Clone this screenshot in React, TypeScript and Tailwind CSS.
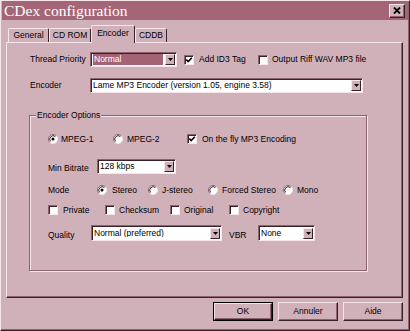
import React from "react";

// small win9x-style widgets, pink theme

function Check({ checked = false }: { checked?: boolean }) {
  return (
    <span className="flex h-[10px] w-[10px] shrink-0 items-center justify-center border border-t-[#8c6470] border-l-[#8c6470] border-b-[#f4e6ea] border-r-[#f4e6ea] bg-white shadow-[inset_1px_1px_0_#3a2028]">
      {checked && (
        <svg width="8" height="8" viewBox="0 0 8 8">
          <polyline points="1.3,3.6 3.2,5.6 6.8,1.8" fill="none" stroke="#000" strokeWidth="1.6" />
        </svg>
      )}
    </span>
  );
}

function Radio({ checked = false }: { checked?: boolean }) {
  return (
    <svg width="10" height="10" viewBox="0 0 10 10" className="shrink-0">
      <circle cx="5" cy="5" r="4.5" fill="#fff" />
      <path d="M1.8 8.2 A4.5 4.5 0 0 1 8.2 1.8" fill="none" stroke="#8c6470" strokeWidth="1" />
      <path d="M2.6 7.4 A3.4 3.4 0 0 1 7.4 2.6" fill="none" stroke="#3a2028" strokeWidth="1" />
      <path d="M8.2 1.8 A4.5 4.5 0 0 1 1.8 8.2" fill="none" stroke="#f4e6ea" strokeWidth="1" />
      {checked && <circle cx="5" cy="5" r="1.5" fill="#000" />}
    </svg>
  );
}

function Select({ text, className, hl = false }: { text: string; className: string; hl?: boolean }) {
  return (
    <div className={`flex h-[15px] items-center border border-t-[#8c6470] border-l-[#8c6470] border-b-[#f4e6ea] border-r-[#f4e6ea] bg-white shadow-[inset_1px_1px_0_#3a2028] ${className}`}>
      {hl ? (
        <span className="ml-[2px] mr-[2px] flex h-[11px] flex-1 items-center bg-[#a36374] px-[1px] text-white">{text}</span>
      ) : (
        <span className="flex-1 truncate pl-[2px]">{text}</span>
      )}
      <span className="mr-[1px] flex h-[11px] w-[10px] items-center justify-center border border-t-[#f4e6ea] border-l-[#f4e6ea] border-b-[#3a2028] border-r-[#3a2028] bg-[#d1b1b9]">
        <svg width="5" height="3" viewBox="0 0 5 3">
          <polygon points="0,0 5,0 2.5,3" fill="#000" />
        </svg>
      </span>
    </div>
  );
}

function Tab({ label, className, active = false }: { label: string; className: string; active?: boolean }) {
  return (
    <div
      className={`flex items-center justify-center rounded-t-[2px] border-t border-l border-r border-t-[#f4e6ea] border-l-[#f4e6ea] border-r-[#3a2028] bg-[#d1b1b9] ${
        active ? "relative z-10 -mb-[1px] h-[18px] pb-[2px]" : "h-[14px]"
      } ${className}`}
    >
      {label}
    </div>
  );
}

function Button({ label, def = false }: { label: string; def?: boolean }) {
  return (
    <div className={`h-[19px] w-[60px] ${def ? "border border-black" : ""}`}>
      <div className="flex h-full w-full items-center justify-center border border-t-[#f4e6ea] border-l-[#f4e6ea] border-b-[#3a2028] border-r-[#3a2028] shadow-[inset_-1px_-1px_0_#8c6470]">
        {label}
      </div>
    </div>
  );
}

export default function App() {
  return (
    <div className="h-[331px] w-[410px] overflow-hidden border-t border-l border-r border-b border-t-[#f4e6ea] border-l-[#f4e6ea] border-r-[#3a2028] border-b-[#3a2028] bg-[#d1b1b9] font-['Liberation_Sans',Arial,sans-serif] text-[8.5px] leading-none text-black shadow-[inset_-1px_-1px_0_#8c6470]">
      {/* title bar */}
      <div className="mx-[1px] flex h-[19px] items-center justify-between bg-[#a46676] pl-[2px] pr-[3px]">
        <span className="font-['Liberation_Serif',serif] text-[15.5px] leading-none text-white">CDex configuration</span>
        <span className="flex h-[14px] w-[16px] items-center justify-center border border-t-[#f4e6ea] border-l-[#f4e6ea] border-b-[#3a2028] border-r-[#3a2028] bg-[#d1b1b9] shadow-[inset_-1px_-1px_0_#8c6470]">
          <svg width="8" height="7" viewBox="0 0 8 7">
            <path d="M1 0.5 L7 6.5 M7 0.5 L1 6.5" stroke="#000" strokeWidth="1.8" />
          </svg>
        </span>
      </div>

      {/* tabs */}
      <div className="flex h-[22px] items-end pl-[7px]">
        <Tab label="General" className="w-[41px]" />
        <Tab label="CD ROM" className="w-[42px]" />
        <Tab label="Encoder" active className="w-[44px]" />
        <Tab label="CDDB" className="w-[32px]" />
      </div>

      {/* panel */}
      <div className="ml-[5px] h-[256px] w-[397px] border-t border-l border-r border-b border-t-[#f4e6ea] border-l-[#f4e6ea] border-r-[#3a2028] border-b-[#3a2028] shadow-[inset_-1px_-1px_0_#8c6470]">
        <div className="mt-[9px] flex h-[15px] items-center pl-[23px]">
          <span className="w-[60px]">Thread Priority</span>
          <Select text="Normal" hl className="w-[87px]" />
          <div className="ml-[7px] flex w-[74px] items-center gap-[5px]">
            <Check checked />
            <span>Add ID3 Tag</span>
          </div>
          <div className="flex items-center gap-[4px]">
            <Check />
            <span>Output Riff WAV MP3 file</span>
          </div>
        </div>

        <div className="mt-[11px] flex h-[15px] items-center pl-[23px]">
          <span className="w-[60px]">Encoder</span>
          <Select text="Lame MP3 Encoder (version 1.05, engine 3.58)" className="w-[273px]" />
        </div>

        {/* Encoder Options group */}
        <div className="relative ml-[22px] mt-[22px] h-[156px] w-[338px] border border-[#8c6470] shadow-[1px_1px_0_#f4e6ea,inset_1px_1px_0_#f4e6ea]">
          <span className="absolute -top-[5px] left-[6px] bg-[#d1b1b9] px-[1px]">Encoder Options</span>

          <div className="mt-[17px] flex h-[12px] items-center pl-[18px]">
            <div className="flex w-[65px] items-center gap-[3px]">
              <Radio checked />
              <span>MPEG-1</span>
            </div>
            <div className="flex w-[74px] items-center gap-[4px]">
              <Radio />
              <span>MPEG-2</span>
            </div>
            <div className="flex items-center gap-[5px]">
              <Check checked />
              <span>On the fly MP3 Encoding</span>
            </div>
          </div>

          <div className="mt-[14px] flex h-[15px] items-center pl-[18px]">
            <span className="mt-[3px] w-[49px]">Min Bitrate</span>
            <Select text="128 kbps" className="w-[79px]" />
          </div>

          <div className="mt-[10px] flex h-[12px] items-center pl-[18px]">
            <span className="w-[49px]">Mode</span>
            <div className="flex w-[51px] items-center gap-[5px]">
              <Radio checked />
              <span>Stereo</span>
            </div>
            <div className="flex w-[60px] items-center gap-[4px]">
              <Radio />
              <span>J-stereo</span>
            </div>
            <div className="flex w-[75px] items-center gap-[4px]">
              <Radio />
              <span>Forced Stereo</span>
            </div>
            <div className="flex items-center gap-[4px]">
              <Radio />
              <span>Mono</span>
            </div>
          </div>

          <div className="mt-[8px] flex h-[12px] items-center pl-[18px]">
            <div className="flex w-[57px] items-center gap-[5px]">
              <Check />
              <span>Private</span>
            </div>
            <div className="flex w-[65px] items-center gap-[4px]">
              <Check />
              <span>Checksum</span>
            </div>
            <div className="flex w-[59px] items-center gap-[4px]">
              <Check />
              <span>Original</span>
            </div>
            <div className="flex items-center gap-[4px]">
              <Check />
              <span>Copyright</span>
            </div>
          </div>

          <div className="mt-[9px] flex h-[16px] items-center pl-[18px]">
            <span className="mt-[5px] w-[43px]">Quality</span>
            <Select text="Normal (preferred)" className="h-[16px] w-[131px]" />
            <span className="ml-[7px] mt-[5px] w-[29px]">VBR</span>
            <Select text="None" className="h-[16px] w-[57px]" />
          </div>
        </div>
      </div>

      {/* buttons */}
      <div className="mt-[4px] flex justify-end gap-[5px] pr-[6px]">
        <Button label="OK" def />
        <Button label="Annuler" />
        <Button label="Aide" />
      </div>
    </div>
  );
}
